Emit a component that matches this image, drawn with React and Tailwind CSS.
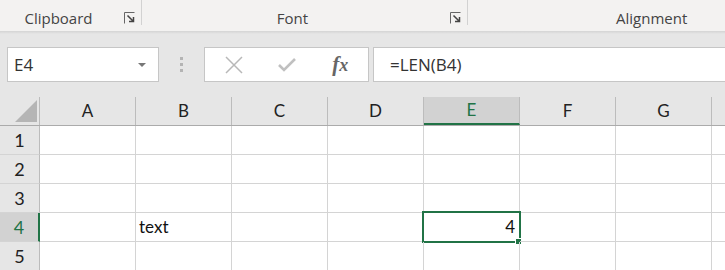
import React from 'react';

const cols = ['A', 'B', 'C', 'D', 'E', 'F', 'G'];
const rows = [1, 2, 3, 4, 5];

const uiFont = { fontFamily: '"Open Sans", "Noto Sans", sans-serif' };
const cellFont = { fontFamily: 'Lato, "Liberation Sans", sans-serif' };

const Launcher = () => (
  <svg width="12" height="12" viewBox="0 0 12 12" className="block">
    <path d="M0.5 11.5V0.5h10" fill="none" stroke="#666" strokeWidth="1" />
    <path d="M3.5 3.5l6 6M9.5 5v4.5H5" fill="none" stroke="#444" strokeWidth="1.5" />
  </svg>
);

const RibbonGroup = ({ label, width }) => (
  <div className="relative flex h-full items-end justify-center pb-[2px] pr-[24px]" style={{ width }}>
    <span className="text-[15px] text-[#444]">{label}</span>
    <span className="absolute right-[5px] bottom-[7px]">
      <Launcher />
    </span>
  </div>
);

const Divider = () => <div className="h-[25px] w-px shrink-0 self-start bg-[#d2d2d2]" />;

const HeaderCell = ({ label, selected }) => (
  <div
    className={`flex h-full w-[96px] shrink-0 items-center justify-center border-r border-[#bcbcbc] text-[17px] ${
      selected ? 'bg-[#d2d2d2] text-[#217346] border-b-2 border-b-[#217346]' : 'text-[#222]'
    }`}
  >
    {label}
  </div>
);

export default function App() {
  return (
    <div className="w-[725px] h-[270px] overflow-hidden bg-[#e6e6e6]" style={uiFont}>
      {/* Ribbon group labels */}
      <div className="flex h-[31px] bg-[#f3f2f1]">
        <RibbonGroup label="Clipboard" width={141} />
        <Divider />
        <RibbonGroup label="Font" width={325} />
        <Divider />
        <div className="flex h-full flex-1 items-end pb-[2px] pl-[148px]">
          <span className="text-[15px] text-[#444]">Alignment</span>
        </div>
      </div>
      <div className="h-[3px] bg-gradient-to-b from-[#d4d4d4] to-[#e6e6e6]" />

      {/* Formula bar */}
      <div className="flex h-[63px] items-start pt-[13px]">
        <div className="ml-[7px] flex h-[35px] w-[152px] items-center justify-between border border-[#c6c6c6] bg-white pl-[6px] pr-[12px]">
          <span className="text-[17px] text-[#333]">E4</span>
          <svg width="8" height="4" viewBox="0 0 8 4">
            <path d="M0 0h8L4 4z" fill="#777" />
          </svg>
        </div>
        <div className="flex h-[35px] w-[45px] flex-col items-center justify-center gap-[3px]">
          <span className="block h-[3px] w-[3px] bg-[#b4b4b4]" />
          <span className="block h-[3px] w-[3px] bg-[#b4b4b4]" />
          <span className="block h-[3px] w-[3px] bg-[#b4b4b4]" />
        </div>
        <div className="flex h-[35px] w-[165px] items-center border border-[#c6c6c6] bg-white">
          <div className="flex w-[56px] justify-center pl-[2px]">
            <svg width="18" height="18" viewBox="0 0 18 18">
              <path d="M1 1l16 16M17 1L1 17" stroke="#b8b8b8" strokeWidth="1.5" />
            </svg>
          </div>
          <div className="flex w-[52px] justify-center">
            <svg width="18" height="14" viewBox="0 0 18 14">
              <path d="M1 7l5 5L17 1" fill="none" stroke="#c0c0c0" strokeWidth="2.6" />
            </svg>
          </div>
          <div className="flex w-[56px] justify-center">
            <span
              className="text-[21px] font-bold italic leading-none text-[#666]"
              style={{ fontFamily: '"Liberation Serif", serif' }}
            >
              f<span className="text-[18px]">x</span>
            </span>
          </div>
        </div>
        <div className="ml-[4px] flex h-[35px] flex-1 items-center border border-r-0 border-[#c6c6c6] bg-white pl-[16px]">
          <span className="text-[17px] text-[#333]">=LEN(B4)</span>
        </div>
      </div>

      {/* Sheet grid */}
      <div style={cellFont}>
        <div className="flex h-[29px] border-b border-[#ababab]">
          <div className="relative h-full w-[40px] shrink-0 border-r border-[#bcbcbc]">
            <svg className="absolute left-[15px] top-[3px]" width="22" height="22" viewBox="0 0 22 22">
              <path d="M22 0V22H0z" fill="#b5b5b5" />
            </svg>
          </div>
          {cols.map((c) => (
            <HeaderCell key={c} label={c} selected={c === 'E'} />
          ))}
          <div className="h-full flex-1" />
        </div>

        {rows.map((r) => (
          <div key={r} className="flex h-[29px] bg-white">
            <div
              className={`flex h-full w-[40px] shrink-0 items-center justify-center border-b border-[#d4d4d4] text-[18px] ${
                r === 4
                  ? 'bg-[#d2d2d2] text-[#217346] border-r-2 border-r-[#217346]'
                  : 'bg-[#e6e6e6] text-[#222] border-r border-r-[#bcbcbc]'
              }`}
            >
              {r}
            </div>
            {cols.map((c) => (
              <div
                key={c}
                className="relative flex h-full w-[96px] shrink-0 items-center border-r border-b border-[#d4d4d4] text-[17px] text-[#111]"
              >
                {r === 4 && c === 'B' && <span className="pl-[3px]">text</span>}
                {r === 4 && c === 'E' && (
                  <>
                    <span className="w-full pr-[4px] text-right">4</span>
                    <div className="absolute -left-[2px] -top-[2px] h-[32px] w-[99px] border-2 border-[#217346]" />
                    <div className="absolute -right-[3px] -bottom-[4px] h-[7px] w-[7px] border border-white bg-[#217346]" />
                  </>
                )}
              </div>
            ))}
            <div className="h-full flex-1 border-b border-[#d4d4d4]" />
          </div>
        ))}
      </div>
    </div>
  );
}
